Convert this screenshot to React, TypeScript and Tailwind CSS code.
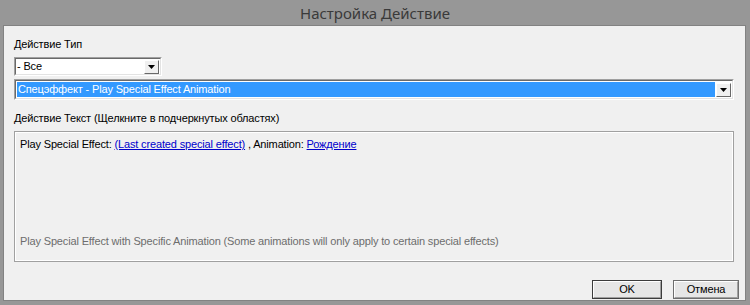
import React from 'react';

const font = { fontFamily: '"Liberation Sans", Arial, sans-serif' };

const DropArrow: React.FC = () => (
  <div className="w-[15px] h-[14px] bg-[#f0f0f0] border border-t-white border-l-white border-r-[#696969] border-b-[#696969] flex items-center justify-center shrink-0">
    <svg width="7" height="4" viewBox="0 0 7 4">
      <path d="M0 0h7L3.5 4z" fill="#000" />
    </svg>
  </div>
);

const Combo: React.FC<{ width: string; children: React.ReactNode; selected?: boolean }> = ({ width, children, selected }) => (
  <div className={`${width} border border-t-[#a0a0a0] border-l-[#a0a0a0] border-r-white border-b-white`}>
    <div className="flex items-center h-full border border-t-[#696969] border-l-[#696969] border-r-[#e3e3e3] border-b-[#e3e3e3] bg-white pr-[1px]">
      <div className={`flex-1 h-full flex items-center ${selected ? 'p-[1px]' : ''}`}>
        <div className={`w-full h-full flex items-center text-[11px] tracking-[-0.15px] leading-none pl-[1px] ${selected ? 'bg-[#3399ff] text-white' : 'text-black'}`}>
          {children}
        </div>
      </div>
      <DropArrow />
    </div>
  </div>
);

const WinButton: React.FC<{ label: string; width: string; isDefault?: boolean }> = ({ label, width, isDefault }) => (
  <div className={`${width} h-[19px] border ${isDefault ? 'border-[#3c3c3c]' : 'border-[#6e6e6e]'}`}>
    <div className="h-full border border-t-white border-l-white border-r-[#a0a0a0] border-b-[#a0a0a0] bg-[#e6e6e6] flex items-center justify-center text-[11px] tracking-[-0.15px] text-black leading-none">
      {label}
    </div>
  </div>
);

export default function App() {
  return (
    <div className="w-[750px] h-[305px] bg-[#979797] flex flex-col" style={font}>
      {/* Title bar */}
      <div className="h-[25px] flex items-center justify-center text-[15px] text-[#3a3a3a] pt-[1px]" style={{ fontFamily: '"Noto Sans", "Open Sans", sans-serif' }}>
        Настройка Действие
      </div>

      {/* Client area */}
      <div className="flex-1 ml-[3px] mr-[4px] mb-[4px] bg-[#f0f0f0] border border-[#828282] flex flex-col pl-[10px] pr-[10px]">
        <div className="text-[11px] tracking-[-0.15px] text-black leading-[14px] mt-[11px]">Действие Тип</div>

        <div className="mt-[6px] h-[19px] flex">
          <Combo width="w-[148px]">- Все</Combo>
        </div>

        <div className="mt-[3px] h-[21px] flex">
          <Combo width="w-[720px]" selected>Спецэффект - Play Special Effect Animation</Combo>
        </div>

        <div className="text-[11px] tracking-[-0.15px] text-black leading-[14px] mt-[11px]">Действие Текст (Щелкните в подчеркнутых областях)</div>

        <div className="mt-[6px] w-[720px] h-[131px] border border-[#a0a0a0]">
          <div className="h-full border border-white flex flex-col px-[4px] pt-[4px] pb-[12px] justify-between">
            <div className="text-[11px] tracking-[-0.15px] leading-[14px] text-black">
              Play Special Effect: <span className="text-[#0000cc] underline">(Last created special effect)</span> , Animation: <span className="text-[#0000cc] underline">Рождение</span>
            </div>
            <div className="text-[11px] tracking-[-0.15px] leading-[14px] text-[#6d6d6d]">
              Play Special Effect with Specific Animation (Some animations will only apply to certain special effects)
            </div>
          </div>
        </div>

        <div className="flex justify-end gap-[11px] mt-[18px] mr-[-4px]">
          <WinButton label="OK" width="w-[70px]" isDefault />
          <WinButton label="Отмена" width="w-[66px]" />
        </div>
      </div>
    </div>
  );
}
